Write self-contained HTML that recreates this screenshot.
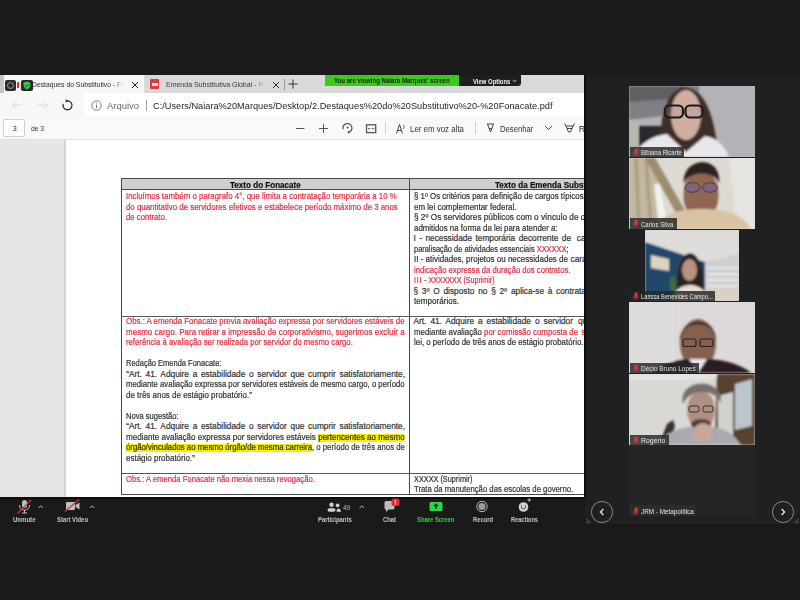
<!DOCTYPE html>
<html><head><meta charset="utf-8">
<style>
*{margin:0;padding:0;box-sizing:border-box}
html,body{width:800px;height:600px;overflow:hidden;background:#1a1a1a;font-family:"Liberation Sans",sans-serif;position:relative}
.a{position:absolute}
#screen{position:absolute;left:0;top:75px;width:585px;height:422px;overflow:hidden;background:#e6e6e6}
#in{position:absolute;left:0;top:-75px;width:800px;height:600px}
.t{position:absolute;white-space:nowrap;line-height:12px;transform-origin:0 0}
.d{-webkit-text-stroke:0.2px currentColor}
.hl{background:linear-gradient(transparent 1.6px,#f6ef00 1.6px)}
.vf{position:absolute;overflow:hidden}
.nlb{position:absolute;background:rgba(38,38,38,.82)}
.mic{position:absolute;width:4px;height:7px;background:#e5393c;border-radius:1.5px}
</style></head><body>
<div id="screen"><div id="in">
  <!-- tab bar -->
  <div class="a" style="left:0;top:75px;width:585px;height:18px;background:#d9d9d9"></div>
  <div class="a" style="left:4px;top:75px;width:140px;height:18px;background:#f7f7f7"></div>
  <div class="a" style="left:0;top:75px;width:4px;height:18px;background:#c4c4c4"></div>
  <div class="a" style="left:5px;top:80px;width:11px;height:11px;background:#2a2a2a;border-radius:2px"></div>
  <div class="a" style="left:7px;top:82px;width:7px;height:7px;border:1px solid #9a9a9a;border-radius:50%"></div>
  <div class="a" style="left:17px;top:82px;width:2px;height:6px;background:#e03030"></div>
  <div class="a" style="left:21px;top:80px;width:12px;height:11px;background:#2a2a2a;border-radius:2px"></div>
  <svg class="a" style="left:23px;top:81px" width="8" height="9" viewBox="0 0 8 9"><path d="M4 0.5 L7.5 1.8 L7.3 5 Q6.5 7.5 4 8.6 Q1.5 7.5 0.7 5 L0.5 1.8 Z" fill="#2ad54a"/><path d="M2.2 4.4 L3.5 5.7 L5.9 3.2" stroke="#0c3a12" stroke-width="0.9" fill="none"/></svg>
  <svg class="a" style="left:131px;top:80.5px" width="8" height="8" viewBox="0 0 8 8"><path d="M1 1 L7 7 M7 1 L1 7" stroke="#222" stroke-width="1"/></svg>
  <div class="a" style="left:150px;top:79px;width:9px;height:10px;background:#d83b3b;border-radius:1px"></div>
  <div class="a" style="left:151.5px;top:83px;width:6px;height:3px;background:#fff;opacity:.85"></div>
  <svg class="a" style="left:272px;top:80.5px" width="8" height="8" viewBox="0 0 8 8"><path d="M1 1 L7 7 M7 1 L1 7" stroke="#333" stroke-width="1"/></svg>
  <div class="a" style="left:284px;top:79px;width:1px;height:11px;background:#9a9a9a"></div>
  <svg class="a" style="left:288px;top:79px" width="10" height="10" viewBox="0 0 10 10"><path d="M5 0.5 V9.5 M0.5 5 H9.5" stroke="#333" stroke-width="1"/></svg>
  <!-- address -->
  <div class="a" style="left:0;top:93px;width:585px;height:23px;background:#f7f7f7"></div>
  <div class="a" style="left:84px;top:93px;width:501px;height:23px;background:#fff"></div>
  <svg class="a" style="left:11px;top:100px" width="12" height="10" viewBox="0 0 12 10"><path d="M11 5 H1.5 M5.5 1 L1.5 5 L5.5 9" stroke="#d4d4d4" stroke-width="0.9" fill="none"/></svg>
  <svg class="a" style="left:37px;top:100px" width="12" height="10" viewBox="0 0 12 10"><path d="M1 5 H10.5 M6.5 1 L10.5 5 L6.5 9" stroke="#d4d4d4" stroke-width="0.9" fill="none"/></svg>
  <svg class="a" style="left:61px;top:98.5px" width="13" height="13" viewBox="0 0 13 13"><path d="M6.5 1.8 A4.5 4.5 0 1 1 2.27 4.76" stroke="#2b2b2b" stroke-width="1.2" fill="none"/><path d="M4.6 0.2 L7.9 1.8 L4.9 3.8 Z" fill="#2b2b2b"/></svg>
  <svg class="a" style="left:91px;top:100px" width="11" height="11" viewBox="0 0 11 11"><circle cx="5.5" cy="5.5" r="4.7" stroke="#7a7a7a" stroke-width="1" fill="none"/><path d="M5.5 4.6 V8.2" stroke="#7a7a7a" stroke-width="1"/><circle cx="5.5" cy="3" r="0.6" fill="#7a7a7a"/></svg>
  <div class="a" style="left:146px;top:100px;width:1px;height:11px;background:#a0a0a0"></div>
  <!-- pdf toolbar -->
  <div class="a" style="left:0;top:116px;width:585px;height:24px;background:#f9f9f9;border-bottom:1px solid #e1e1e1"></div>
  <div class="a" style="left:3px;top:119px;width:22px;height:18px;background:#fff;border:1px solid #d0d0d0;border-radius:1px"></div>
  <svg class="a" style="left:295px;top:123px" width="120" height="12" viewBox="0 0 120 12">
    <path d="M1 5.5 H9.5" stroke="#555" stroke-width="1"/>
    <path d="M28.5 1 V10 M24 5.5 H33" stroke="#555" stroke-width="1"/>
    <path d="M48.2 6.3 A4.4 4.4 0 1 1 54.6 8.8" stroke="#555" stroke-width="1.2" fill="none"/><circle cx="52.6" cy="4.6" r="1" fill="#555"/><circle cx="53.8" cy="9.2" r="1.1" fill="#444"/>
    <rect x="71.5" y="1.8" width="9.2" height="7.8" stroke="#555" stroke-width="1.3" fill="none"/><path d="M73 5.7 H75.4 M76.8 5.7 H79.2" stroke="#555" stroke-width="1"/>
    <path d="M101.5 10.5 L104.5 1.5 L107.5 10.5 M102.5 7.5 H106.5" stroke="#444" stroke-width="1" fill="none"/><path d="M108.5 2 Q110 4 108.5 6" stroke="#444" stroke-width="0.8" fill="none"/>
  </svg>
  <div class="a" style="left:385px;top:122px;width:1px;height:12px;background:#cfcfcf"></div>
  <div class="a" style="left:475px;top:122px;width:1px;height:12px;background:#cfcfcf"></div>
  <svg class="a" style="left:485px;top:122px" width="100" height="12" viewBox="0 0 100 12">
    <path d="M2 2 L9 2 M2.5 2 L5.5 10 L8.5 2 M4.2 6.5 H6.8" stroke="#444" stroke-width="1" fill="none"/>
    <path d="M60 4 L63.5 7.5 L67 4" stroke="#444" stroke-width="1" fill="none"/>
    <path d="M79.5 1.5 L81 4 L88 4 L89.5 1.5 M81 4 L83.5 10 L85.5 10 L88 4 M82 6.5 H87" stroke="#444" stroke-width="1" fill="none"/>
  </svg>
  <!-- page -->
  <div class="a" style="left:64px;top:140px;width:2px;height:360px;background:#d4d4d4"></div>
  <div class="a" style="left:66px;top:140px;width:530px;height:360px;background:#fff"></div>
  <div class="a" style="left:13px;top:140px;width:1px;height:360px;background:#e0e0e0"></div>
  <!-- table -->
  <div class="a" style="left:121px;top:178px;width:480px;height:11px;background:#d0cece"></div>
  <div class="a" style="left:121px;top:177.6px;width:480px;height:1.4px;background:#4a4a4a"></div>
  <div class="a" style="left:121px;top:189px;width:480px;height:1px;background:#4a4a4a"></div>
  <div class="a" style="left:121px;top:315.6px;width:480px;height:1px;background:#5a5a5a"></div>
  <div class="a" style="left:121px;top:472.8px;width:480px;height:1px;background:#5a5a5a"></div>
  <div class="a" style="left:121px;top:493.6px;width:480px;height:1px;background:#4a4a4a"></div>
  <div class="a" style="left:121px;top:178px;width:1.1px;height:316px;background:#4a4a4a"></div>
  <div class="a" style="left:408.7px;top:178px;width:1.1px;height:316px;background:#4a4a4a"></div>
<div class="t d" style="left:230.00px;top:178.59px;font-size:8.8px;color:#111;font-weight:bold;transform:scaleX(0.9185);">Texto do Fonacate</div>
<div class="t d" style="left:495.00px;top:178.59px;font-size:8.8px;color:#111;font-weight:bold;transform:scaleX(0.9201);">Texto da Emenda Substitutiva</div>
<div class="t d" style="left:126.20px;top:190.26px;font-size:8.3px;color:#e42d42;font-weight:normal;transform:scaleX(0.9480);">Incluímos também o paragrafo 4°, que limita a contratação temporária a 10 %</div>
<div class="t d" style="left:126.20px;top:200.74px;font-size:8.3px;color:#e42d42;font-weight:normal;transform:scaleX(0.9474);">do quantitativo de servidores efetivos e estabelece período máximo de 3 anos</div>
<div class="t d" style="left:126.20px;top:211.22px;font-size:8.3px;color:#e42d42;font-weight:normal;transform:scaleX(0.9355);">de contrato.</div>
<div class="t d" style="left:413.50px;top:190.26px;font-size:8.3px;color:#333333;font-weight:normal;transform:scaleX(0.9519);">§ 1º Os critérios para definição de cargos típicos</div>
<div class="t d" style="left:586.00px;top:190.26px;font-size:8.3px;color:#333333;font-weight:normal;">de</div>
<div class="t d" style="left:413.50px;top:200.74px;font-size:8.3px;color:#333333;font-weight:normal;transform:scaleX(0.9579);">em lei complementar federal.</div>
<div class="t d" style="left:413.50px;top:211.22px;font-size:8.3px;color:#333333;font-weight:normal;transform:scaleX(0.9919);">§ 2º Os servidores públicos com o vínculo de que</div>
<div class="t d" style="left:413.50px;top:221.70px;font-size:8.3px;color:#333333;font-weight:normal;transform:scaleX(0.9486);">admitidos na forma da lei para atender a:</div>
<div class="t d" style="left:413.50px;top:232.18px;font-size:8.3px;color:#333333;font-weight:normal;width:157.50px;text-align:justify;text-align-last:justify;">I - necessidade temporária decorrente de</div>
<div class="t d" style="left:576.80px;top:232.18px;font-size:8.3px;color:#333333;font-weight:normal;">calamidade</div>
<div class="t d" style="left:413.50px;top:242.66px;font-size:8.3px;color:#333333;font-weight:normal;transform:scaleX(0.8956);">paralisação de atividades essenciais <span style="color:#e42d42">XXXXXX</span>;</div>
<div class="t d" style="left:413.50px;top:253.14px;font-size:8.3px;color:#333333;font-weight:normal;width:159.59px;text-align:justify;text-align-last:justify;transform:scaleX(0.9650);">II - atividades, projetos ou necessidades de</div>
<div class="t d" style="left:570.60px;top:253.14px;font-size:8.3px;color:#333333;font-weight:normal;">caráter</div>
<div class="t d" style="left:413.50px;top:263.62px;font-size:8.3px;color:#e42d42;font-weight:normal;transform:scaleX(0.9245);">indicação expressa da duração dos contratos.</div>
<div class="t d" style="left:413.50px;top:274.10px;font-size:8.3px;color:#e42d42;font-weight:normal;transform:scaleX(0.8521);"><span style="letter-spacing:0.9px">III</span> - XXXXXXX (Suprimir)</div>
<div class="t d" style="left:413.50px;top:284.58px;font-size:8.3px;color:#333333;font-weight:normal;width:139.00px;text-align:justify;text-align-last:justify;">§ 3º O disposto no § 2º aplica-se à</div>
<div class="t d" style="left:556.00px;top:284.58px;font-size:8.3px;color:#333333;font-weight:normal;">contratação</div>
<div class="t d" style="left:413.50px;top:295.06px;font-size:8.3px;color:#333333;font-weight:normal;transform:scaleX(0.9756);">temporários.</div>
<div class="t d" style="left:126.20px;top:315.46px;font-size:8.3px;color:#e42d42;font-weight:normal;width:293.33px;text-align:justify;text-align-last:justify;transform:scaleX(0.9498);">Obs.: A emenda Fonacate previa avaliação expressa por servidores estáveis de</div>
<div class="t d" style="left:126.20px;top:325.94px;font-size:8.3px;color:#e42d42;font-weight:normal;width:287.73px;text-align:justify;text-align-last:justify;transform:scaleX(0.9683);">mesmo cargo. Para retirar a impressão de corporativismo, sugerimos excluir a</div>
<div class="t d" style="left:126.20px;top:336.42px;font-size:8.3px;color:#e42d42;font-weight:normal;transform:scaleX(0.9314);">referência à avaliação ser realizada por servidor do mesmo cargo.</div>
<div class="t d" style="left:126.20px;top:357.38px;font-size:8.3px;color:#333333;font-weight:normal;transform:scaleX(0.9032);">Redação Emenda Fonacate:</div>
<div class="t d" style="left:126.20px;top:367.86px;font-size:8.3px;color:#333333;font-weight:normal;width:278.80px;text-align:justify;text-align-last:justify;">“Art. 41. Adquire a estabilidade o servidor que cumprir satisfatoriamente,</div>
<div class="t d" style="left:126.20px;top:378.34px;font-size:8.3px;color:#333333;font-weight:normal;width:298.86px;text-align:justify;text-align-last:justify;transform:scaleX(0.9322);">mediante avaliação expressa por servidores estáveis de mesmo cargo, o período</div>
<div class="t d" style="left:126.20px;top:388.82px;font-size:8.3px;color:#333333;font-weight:normal;transform:scaleX(0.9603);">de três anos de estágio probatório.”</div>
<div class="t d" style="left:126.20px;top:409.78px;font-size:8.3px;color:#333333;font-weight:normal;transform:scaleX(0.9123);">Nova sugestão:</div>
<div class="t d" style="left:126.20px;top:420.26px;font-size:8.3px;color:#333333;font-weight:normal;width:278.80px;text-align:justify;text-align-last:justify;">“Art. 41. Adquire a estabilidade o servidor que cumprir satisfatoriamente,</div>
<div class="t d" style="left:126.20px;top:430.74px;font-size:8.3px;color:#333333;font-weight:normal;width:286.41px;text-align:justify;text-align-last:justify;transform:scaleX(0.9734);">mediante avaliação expressa por servidores estáveis <span class="hl">pertencentes ao mesmo</span></div>
<div class="t d" style="left:126.20px;top:441.22px;font-size:8.3px;color:#333333;font-weight:normal;width:297.94px;text-align:justify;text-align-last:justify;transform:scaleX(0.9358);"><span class="hl">órgão/vinculados ao mesmo órgão/de mesma carreira</span>, o período de três anos de</div>
<div class="t d" style="left:126.20px;top:451.70px;font-size:8.3px;color:#333333;font-weight:normal;transform:scaleX(0.9622);">estágio probatório.”</div>
<div class="t d" style="left:413.50px;top:315.46px;font-size:8.3px;color:#333333;font-weight:normal;width:159.50px;text-align:justify;text-align-last:justify;">Art. 41. Adquire a estabilidade o servidor</div>
<div class="t d" style="left:578.00px;top:315.46px;font-size:8.3px;color:#333333;font-weight:normal;">que</div>
<div class="t d" style="left:413.50px;top:325.94px;font-size:8.3px;color:#333333;font-weight:normal;transform:scaleX(0.9487);">mediante avaliação <span style="color:#e42d42">por comissão composta de</span></div>
<div class="t d" style="left:581.50px;top:325.94px;font-size:8.3px;color:#e42d42;font-weight:normal;">servidores</div>
<div class="t d" style="left:413.50px;top:336.42px;font-size:8.3px;color:#333333;font-weight:normal;transform:scaleX(0.9495);">lei, o período de três anos de estágio probatório.</div>
<div class="t d" style="left:126.20px;top:472.76px;font-size:8.3px;color:#e42d42;font-weight:normal;transform:scaleX(0.9240);">Obs.: A emenda Fonacate não mexia nessa revogação.</div>
<div class="t d" style="left:413.50px;top:472.76px;font-size:8.3px;color:#333333;font-weight:normal;transform:scaleX(0.8811);">XXXXX (Suprimir)</div>
<div class="t d" style="left:413.50px;top:483.26px;font-size:8.3px;color:#333333;font-weight:normal;transform:scaleX(0.9320);">Trata da manutenção das escolas de governo.</div>
<div class="t" style="left:32.00px;top:78.56px;font-size:8px;color:#2a2a2a;font-weight:normal;transform:scaleX(0.8502);">Destaques do Substitutivo - Fo</div>
<div class="t" style="left:166.00px;top:78.56px;font-size:8px;color:#3a3a3a;font-weight:normal;transform:scaleX(0.8731);">Emenda Substitutiva Global - PI</div>
<div class="t" style="left:107.00px;top:100.16px;font-size:9.5px;color:#6b6b6b;font-weight:normal;transform:scaleX(0.9932);">Arquivo</div>
<div class="t" style="left:152.50px;top:100.16px;font-size:9.5px;color:#1f1f1f;font-weight:normal;transform:scaleX(0.9711);">C:/Users/Naiara%20Marques/Desktop/2.Destaques%20do%20Substitutivo%20-%20Fonacate.pdf</div>
<div class="t" style="left:12.50px;top:123.42px;font-size:7.5px;color:#333;font-weight:normal;">3</div>
<div class="t" style="left:31.00px;top:123.42px;font-size:7.5px;color:#333;font-weight:normal;transform:scaleX(0.8898);">de 3</div>
<div class="t" style="left:410.00px;top:123.39px;font-size:8.5px;color:#333;font-weight:normal;transform:scaleX(0.9290);">Ler em voz alta</div>
<div class="t" style="left:500.40px;top:123.39px;font-size:8.5px;color:#333;font-weight:normal;transform:scaleX(0.9061);">Desenhar</div>
<div class="t" style="left:578.80px;top:123.39px;font-size:8.5px;color:#333;font-weight:normal;">R</div>
  <div class="a" style="left:113px;top:77px;width:14px;height:14px;background:linear-gradient(90deg,rgba(247,247,247,0),#f7f7f7 85%)"></div>
  <div class="a" style="left:253px;top:77px;width:14px;height:14px;background:linear-gradient(90deg,rgba(217,217,217,0),#d9d9d9 85%)"></div>
</div></div>

<!-- zoom banner -->
<div class="a" style="left:325px;top:75px;width:134px;height:11px;background:#3dc81c"></div>
<div class="a" style="left:459px;top:75px;width:62px;height:11px;background:#1e1e1e;border-radius:0 0 3px 0"></div>
<svg class="a" style="left:512px;top:78.5px" width="5" height="4" viewBox="0 0 5 4"><path d="M0.7 1 L2.5 2.8 L4.3 1" stroke="#eee" stroke-width="0.9" fill="none"/></svg>

<!-- gallery -->
<div class="a" style="left:585px;top:75px;width:215px;height:449px;background:#1f2022"></div>
<div class="a" style="left:584px;top:75px;width:2px;height:422px;background:#0e0e0e"></div>
<div class="a" style="left:0;top:497px;width:585px;height:2px;background:#0e0e0e"></div>

<svg class="a" style="left:629px;top:86px" width="126" height="71" viewBox="0 0 126 71">
<defs><filter id="bl1" x="-10%" y="-10%" width="120%" height="120%"><feGaussianBlur stdDeviation="1.3"/></filter></defs>
<rect width="126" height="71" fill="#b3b2b7"/>
<g filter="url(#bl1)">
<path d="M0 0 H70 V26 L0 34 Z" fill="#808084"/>
<path d="M0 0 H55 V12 L0 16 Z" fill="#606064"/>
<path d="M0 34 H9 V71 H0 Z" fill="#b8b8b0"/>
<path d="M10 40 H34 V62 H10 Z" fill="#2a2a2d"/>
<path d="M30 71 C32 40 32 6 55 1 C80 2 86 40 90 71 Z" fill="#3d2e28"/>
<ellipse cx="57" cy="29" rx="15" ry="25" fill="#d0afa2"/>
<path d="M4 71 C10 58 22 50 38 48 L57 66 L76 50 C88 52 96 60 100 71 Z" fill="#eae7eb"/>
</g>
<g stroke="#1f1a1a" stroke-width="2.2" fill="#9a8aa0" fill-opacity=".25"><rect x="36" y="19.5" width="18" height="12" rx="4.5"/><rect x="56.5" y="19.5" width="17" height="12" rx="4.5"/></g>
</svg>
<svg class="a" style="left:629px;top:158px" width="126" height="70.5" viewBox="0 0 126 70.5">
<defs><filter id="bl2" x="-10%" y="-10%" width="120%" height="120%"><feGaussianBlur stdDeviation="1.3"/></filter></defs>
<rect width="126" height="71" fill="#dddad4"/>
<g filter="url(#bl2)">
<path d="M0 0 H26 L36 71 H0 Z" fill="#c3b79f"/>
<path d="M7 0 L10 71 M17 0 L22 71" stroke="#a89c82" stroke-width="3"/>
<path d="M25 26 L31 26 L39 71 H30 Z" fill="#f3f2ee"/>
<path d="M16 0 L26 0 L58 56 L50 60 Z" fill="#9c8c70"/>
<path d="M100 0 H126 V71 H108 Z" fill="#e6e4e0"/>
<ellipse cx="72" cy="37" rx="17.5" ry="26" fill="#8f6650"/>
<path d="M55 26 C52 -2 94 -4 90 26 C88 12 58 12 55 26 Z" fill="#2b2321"/>
<path d="M26 71 C32 56 50 51 72 51 C96 51 114 56 122 71 Z" fill="#d9c3a2"/>
</g>
<g fill="#6a5cc0" fill-opacity=".38" stroke="#3a3040" stroke-width=".8"><ellipse cx="63.5" cy="29.5" rx="7.5" ry="4.8"/><ellipse cx="81" cy="29.5" rx="7.5" ry="4.8"/></g>
</svg>
<svg class="a" style="left:645px;top:230px" width="94" height="70.5" viewBox="0 0 94 70.5">
<defs><filter id="bl3" x="-10%" y="-10%" width="120%" height="120%"><feGaussianBlur stdDeviation="1.1"/></filter></defs>
<rect width="94" height="71" fill="#cfd0d1"/>
<g filter="url(#bl3)">
<path d="M0 0 H94 V24 L60 32 L0 12 Z" fill="#dedddb"/>
<path d="M0 12 L60 32 V71 H0 Z" fill="#24476b"/>
<path d="M60 32 L94 24 V71 H60 Z" fill="#cdcfd1"/>
<path d="M62 38 H94 M62 44 H94 M62 50 H94 M62 56 H94" stroke="#e8e9ea" stroke-width="2"/>
<path d="M64 57 H94 V71 H64 Z" fill="#d8d2c6"/>
<path d="M6 25 L24 29 V41 L6 38 Z" fill="#dcd5c0"/>
<ellipse cx="28" cy="54" rx="3.5" ry="8" fill="#3f6a3a"/>
<path d="M33 71 C30 50 33 24 45 23 C57 24 60 50 58 71 Z" fill="#2b211d"/>
<ellipse cx="44.5" cy="40" rx="7.5" ry="11" fill="#b99283"/>
<path d="M26 71 C29 60 36 55 45 55 C54 55 61 60 66 71 Z" fill="#e6dfd3"/>
</g>
</svg>
<svg class="a" style="left:629px;top:302px" width="126" height="70.5" viewBox="0 0 126 70.5">
<defs><filter id="bl4" x="-10%" y="-10%" width="120%" height="120%"><feGaussianBlur stdDeviation="1.3"/></filter></defs>
<rect width="126" height="71" fill="#dcd9d8"/>
<g filter="url(#bl4)">
<path d="M0 0 H45 V71 H0 Z" fill="#dfdddc"/>
<ellipse cx="69" cy="42" rx="18" ry="25" fill="#85604f"/>
<path d="M51 40 C50 14 88 12 87 40 L84 30 C80 20 58 20 54 30 Z" fill="#3c2b26"/>
<path d="M22 71 C34 61 48 58 60 57 L69 66 L78 57 C96 58 112 62 122 71 Z" fill="#2b1f22"/>
<path d="M60 57 L69 71 L78 57 Z" fill="#e6e2ec"/>
</g>
<g stroke="#2a2222" stroke-width="1.2" fill="none"><rect x="54" y="37" width="13" height="7.5" rx="2"/><rect x="71" y="37" width="13" height="7.5" rx="2"/></g>
</svg>
<svg class="a" style="left:629px;top:374px" width="126" height="70.5" viewBox="0 0 126 70.5">
<defs><filter id="bl5" x="-10%" y="-10%" width="120%" height="120%"><feGaussianBlur stdDeviation="1.3"/></filter></defs>
<rect width="126" height="71" fill="#d9d8d4"/>
<g filter="url(#bl5)">
<path d="M0 0 H90 L84 6 H0 Z" fill="#e3e3e1"/>
<path d="M88 0 H126 V71 H86 Z" fill="#56422f"/>
<path d="M89 22 L104 18 V66 L89 68 Z" fill="#cfd2cd"/>
<path d="M106 10 L123 5 V52 L106 56 Z" fill="#bcc4cc"/>
<path d="M30 71 L38 50 L44 46 L46 52 L40 71 Z" fill="#3a3230"/>
<path d="M28 71 C36 58 52 52 72 52 C92 52 104 58 112 71 Z" fill="#a8aaae"/>
<ellipse cx="72" cy="36" rx="14" ry="19" fill="#ae9183"/>
<path d="M54 30 C48 4 96 2 92 30 C88 14 60 14 54 30 Z" fill="#747069"/>
<ellipse cx="72" cy="50" rx="10" ry="5" fill="#4e4038"/>
<ellipse cx="74" cy="59" rx="10" ry="10" fill="#c8a898"/>
</g>
<g stroke="#3a3030" stroke-width="1" fill="none"><rect x="60" y="32" width="10" height="6" rx="2"/><rect x="74" y="32" width="10" height="6" rx="2"/></g>
</svg>
<div class="vf" style="left:629px;top:445px;width:126px;height:71px;background:#252525"></div>
<div class="nlb" style="left:630px;top:147px;width:54px;height:10px"></div>
<div class="nlb" style="left:630px;top:218px;width:47px;height:10.5px"></div>
<div class="nlb" style="left:630px;top:290.5px;width:85px;height:10px"></div>
<div class="nlb" style="left:630px;top:362.5px;width:69px;height:10px"></div>
<div class="nlb" style="left:630px;top:434.5px;width:39px;height:10px"></div>
<div class="nlb" style="left:630px;top:505px;width:66px;height:11px;background:rgba(45,45,45,.9)"></div>
<svg class="a" style="left:632.5px;top:148.0px" width="6" height="8" viewBox="0 0 6 8"><rect x="1.6" y="0.4" width="2.8" height="4.6" rx="1.4" fill="#e3383b"/><path d="M0.8 3.6 Q0.8 6 3 6 Q5.2 6 5.2 3.6 M3 6 V7.6" stroke="#e3383b" stroke-width="0.8" fill="none"/><path d="M0.4 7.2 L5.6 0.6" stroke="#e3383b" stroke-width="0.8"/></svg>
<svg class="a" style="left:632.5px;top:219.0px" width="6" height="8" viewBox="0 0 6 8"><rect x="1.6" y="0.4" width="2.8" height="4.6" rx="1.4" fill="#e3383b"/><path d="M0.8 3.6 Q0.8 6 3 6 Q5.2 6 5.2 3.6 M3 6 V7.6" stroke="#e3383b" stroke-width="0.8" fill="none"/><path d="M0.4 7.2 L5.6 0.6" stroke="#e3383b" stroke-width="0.8"/></svg>
<svg class="a" style="left:632.5px;top:291.5px" width="6" height="8" viewBox="0 0 6 8"><rect x="1.6" y="0.4" width="2.8" height="4.6" rx="1.4" fill="#e3383b"/><path d="M0.8 3.6 Q0.8 6 3 6 Q5.2 6 5.2 3.6 M3 6 V7.6" stroke="#e3383b" stroke-width="0.8" fill="none"/><path d="M0.4 7.2 L5.6 0.6" stroke="#e3383b" stroke-width="0.8"/></svg>
<svg class="a" style="left:632.5px;top:363.5px" width="6" height="8" viewBox="0 0 6 8"><rect x="1.6" y="0.4" width="2.8" height="4.6" rx="1.4" fill="#e3383b"/><path d="M0.8 3.6 Q0.8 6 3 6 Q5.2 6 5.2 3.6 M3 6 V7.6" stroke="#e3383b" stroke-width="0.8" fill="none"/><path d="M0.4 7.2 L5.6 0.6" stroke="#e3383b" stroke-width="0.8"/></svg>
<svg class="a" style="left:632.5px;top:435.5px" width="6" height="8" viewBox="0 0 6 8"><rect x="1.6" y="0.4" width="2.8" height="4.6" rx="1.4" fill="#e3383b"/><path d="M0.8 3.6 Q0.8 6 3 6 Q5.2 6 5.2 3.6 M3 6 V7.6" stroke="#e3383b" stroke-width="0.8" fill="none"/><path d="M0.4 7.2 L5.6 0.6" stroke="#e3383b" stroke-width="0.8"/></svg>
<svg class="a" style="left:632.5px;top:506.5px" width="6" height="8" viewBox="0 0 6 8"><rect x="1.6" y="0.4" width="2.8" height="4.6" rx="1.4" fill="#e3383b"/><path d="M0.8 3.6 Q0.8 6 3 6 Q5.2 6 5.2 3.6 M3 6 V7.6" stroke="#e3383b" stroke-width="0.8" fill="none"/><path d="M0.4 7.2 L5.6 0.6" stroke="#e3383b" stroke-width="0.8"/></svg>

<div class="a" style="left:591px;top:501px;width:21.5px;height:21.5px;border:1.3px solid #8c8c8c;border-radius:50%"></div>
<svg class="a" style="left:597px;top:507px" width="10" height="10" viewBox="0 0 10 10"><path d="M6.3 2 L3.5 5 L6.3 8" stroke="#eee" stroke-width="1.3" fill="none"/></svg>
<div class="a" style="left:772px;top:501px;width:21.5px;height:21.5px;border:1.3px solid #8c8c8c;border-radius:50%"></div>
<svg class="a" style="left:778px;top:507px" width="10" height="10" viewBox="0 0 10 10"><path d="M3.7 2 L6.5 5 L3.7 8" stroke="#eee" stroke-width="1.3" fill="none"/></svg>

<svg class="a" style="left:586px;top:518px" width="6" height="6" viewBox="0 0 6 6"><path d="M0.5 1 L4.5 5 M0.5 3.5 L2.5 5.5" stroke="#777" stroke-width="0.8"/></svg>
<svg class="a" style="left:793px;top:518px" width="6" height="6" viewBox="0 0 6 6"><path d="M5.5 1 L1.5 5 M5.5 3.5 L3.5 5.5" stroke="#777" stroke-width="0.8"/></svg>
<!-- bottom toolbar icons -->
<svg class="a" style="left:0;top:497px" width="585" height="22" viewBox="0 0 585 22">
  <!-- mic -->
  <rect x="22" y="3" width="5" height="8" rx="2.5" fill="#bdbdbd"/>
  <path d="M19.5 8 Q19.5 13 24.5 13 Q29.5 13 29.5 8 M24.5 13 V16 M22 16 H27" stroke="#bdbdbd" stroke-width="1" fill="none"/>
  <path d="M17.5 16.5 L31 3" stroke="#d2343c" stroke-width="1.2"/>
  <path d="M38.5 11 L40.7 8.8 L42.9 11" stroke="#cfcfcf" stroke-width="0.9" fill="none"/>
  <!-- video -->
  <rect x="66" y="5" width="9" height="8" rx="1" fill="#bdbdbd"/>
  <path d="M75.5 8 L79.5 5.5 V12.5 L75.5 10 Z" fill="#bdbdbd"/>
  <path d="M65 14.5 L79 2.5" stroke="#d2343c" stroke-width="1.2"/>
  <path d="M90 11 L92.2 8.8 L94.4 11" stroke="#cfcfcf" stroke-width="0.9" fill="none"/>
  <!-- participants -->
  <circle cx="331.5" cy="7.8" r="2.2" fill="#cfcfcf"/>
  <rect x="327.5" y="11.2" width="8" height="3.6" rx="1.8" fill="#cfcfcf"/>
  <circle cx="337.6" cy="8.3" r="1.9" fill="#cfcfcf"/>
  <path d="M336.5 14.8 Q336.6 11.6 338.2 11.4 Q341 11.6 341 14.8 Z" fill="#cfcfcf"/>
  <path d="M359.5 11 L361.7 8.8 L363.9 11" stroke="#cfcfcf" stroke-width="0.9" fill="none"/>
  <!-- chat -->
  <path d="M384.5 5.5 Q384.5 4 386 4 H393 Q394.5 4 394.5 5.5 V11 Q394.5 12.5 393 12.5 H388.5 L386 15 V12.5 Q384.5 12.5 384.5 11 Z" fill="#bdbdbd"/>
  <rect x="391.5" y="1.5" width="8" height="7.5" rx="2" fill="#e02b35"/>
  <path d="M395.3 3 V7.5" stroke="#fff" stroke-width="1"/>
  <!-- share -->
  <rect x="429.5" y="5" width="13" height="9" rx="1.5" fill="#2fd44d"/>
  <path d="M436 12 V7.5 M434 9.3 L436 7.2 L438 9.3" stroke="#0d2a10" stroke-width="1.2" fill="none"/>
  <!-- record -->
  <circle cx="482" cy="9.5" r="5.2" stroke="#bdbdbd" stroke-width="1" fill="none"/>
  <circle cx="482" cy="9.5" r="3.6" fill="#9c9c9c"/>
  <!-- reactions -->
  <circle cx="523.5" cy="10" r="4.8" fill="#cfcfcf"/>
  <path d="M521.5 8.5 V11 Q523.5 13 525.5 11 V8.5" stroke="#444" stroke-width="0.8" fill="none"/>
  <path d="M527.5 3 H531 M529.2 1.2 V4.8" stroke="#cfcfcf" stroke-width="0.9"/>
</svg>
<div class="t" style="left:334.00px;top:75.49px;font-size:7px;color:#14260c;font-weight:bold;transform:scaleX(0.8696);">You are viewing Naiara Marques' screen</div>
<div class="t" style="left:472.80px;top:75.65px;font-size:6.5px;color:#f2f2f2;font-weight:bold;transform:scaleX(0.9108);">View Options</div>
<div class="t" style="left:641.20px;top:147.19px;font-size:7px;color:#e6e6e6;font-weight:normal;transform:scaleX(0.8574);">Bibiana Ricarte</div>
<div class="t" style="left:641.20px;top:218.69px;font-size:7px;color:#e6e6e6;font-weight:normal;transform:scaleX(0.8646);">Carlos Silva</div>
<div class="t" style="left:641.20px;top:290.89px;font-size:7px;color:#e6e6e6;font-weight:normal;transform:scaleX(0.8201);">Larissa Benevides Campo...</div>
<div class="t" style="left:641.20px;top:362.69px;font-size:7px;color:#e6e6e6;font-weight:normal;transform:scaleX(0.9203);">Décio Bruno Lopes</div>
<div class="t" style="left:641.20px;top:434.69px;font-size:7px;color:#e6e6e6;font-weight:normal;transform:scaleX(0.9912);">Rogério</div>
<div class="t" style="left:641.20px;top:506.39px;font-size:7px;color:#e6e6e6;font-weight:normal;transform:scaleX(0.9047);">JRM - Metapolítica</div>
<div class="t" style="left:13.00px;top:514.19px;font-size:7px;color:#c4c4c4;font-weight:bold;transform:scaleX(0.8633);">Unmute</div>
<div class="t" style="left:57.00px;top:514.19px;font-size:7px;color:#c4c4c4;font-weight:bold;transform:scaleX(0.8417);">Start Video</div>
<div class="t" style="left:317.80px;top:514.19px;font-size:7px;color:#c4c4c4;font-weight:bold;transform:scaleX(0.8409);">Participants</div>
<div class="t" style="left:383.00px;top:514.19px;font-size:7px;color:#c4c4c4;font-weight:bold;transform:scaleX(0.8353);">Chat</div>
<div class="t" style="left:417.00px;top:514.19px;font-size:7px;color:#31d24b;font-weight:bold;transform:scaleX(0.8358);">Share Screen</div>
<div class="t" style="left:472.60px;top:514.19px;font-size:7px;color:#c4c4c4;font-weight:bold;transform:scaleX(0.8290);">Record</div>
<div class="t" style="left:510.60px;top:514.19px;font-size:7px;color:#c4c4c4;font-weight:bold;transform:scaleX(0.8067);">Reactions</div>
<div class="t" style="left:343.00px;top:501.55px;font-size:6.5px;color:#bdbdbd;font-weight:normal;">49</div>
</body></html>
